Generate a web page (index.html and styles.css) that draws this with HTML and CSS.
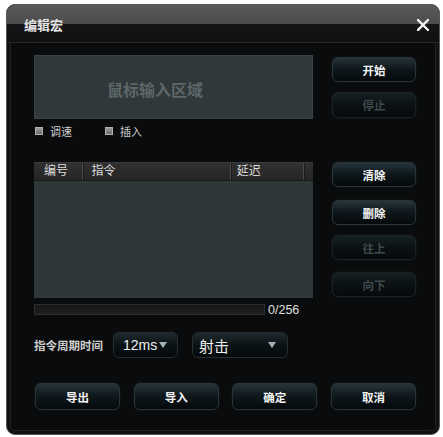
FILE: index.html
```html
<!DOCTYPE html>
<html lang="zh-CN">

<head>
    <meta charset="UTF-8">
    <title>编辑宏</title>
    <link rel="stylesheet" href="styles.css">
</head>

<body>
    <div class="dialog">
        <div class="titlebar">
            <span class="title">编辑宏</span>
            <svg class="close" width="12" height="12" viewBox="0 0 12 12">
                <path d="M1 1 L11 11 M11 1 L1 11" stroke="#f2f2f2" stroke-width="2.4" stroke-linecap="square" />
            </svg>
        </div>

        <div class="content">
            <div class="main">
                <div class="left">
                    <div class="mouse-area">鼠标输入区域</div>
                    <div class="checks">
                        <label class="check"><span class="box"></span>调速</label>
                        <label class="check"><span class="box"></span>插入</label>
                    </div>

                    <div class="list">
                        <div class="list-head">
                            <span class="col col-no">编号</span>
                            <span class="col col-cmd">指令</span>
                            <span class="col col-delay">延迟</span>
                            <span class="col col-end"></span>
                        </div>
                        <div class="list-body"></div>
                    </div>

                    <div class="progress-row">
                        <div class="progress"></div>
                        <span class="count">0/256</span>
                    </div>

                    <div class="cycle-row">
                        <span class="cycle-label">指令周期时间</span>
                        <div class="select select-ms"><span>12ms</span><i class="arrow"></i></div>
                        <div class="select select-act"><span>射击</span><i class="arrow"></i></div>
                    </div>
                </div>

                <div class="right">
                    <button class="btn btn-start">开始</button>
                    <button class="btn btn-stop" disabled>停止</button>
                    <button class="btn btn-clear">清除</button>
                    <button class="btn btn-del">删除</button>
                    <button class="btn btn-up" disabled>往上</button>
                    <button class="btn btn-down" disabled>向下</button>
                </div>
            </div>

            <div class="footer">
                <button class="btn">导出</button>
                <button class="btn">导入</button>
                <button class="btn">确定</button>
                <button class="btn">取消</button>
            </div>
        </div>
    </div>
</body>

</html>
```

FILE: styles.css
```css
body {
    margin: 0;
    background-color: #fff;
    font-family: "Liberation Sans", "Noto Sans CJK SC", sans-serif;
}

.dialog {
    box-sizing: border-box;
    width: 434px;
    height: 431px;
    margin: 4px 0 0 6px;
    border: 1px solid #555;
    border-radius: 9px;
    background-color: #0a0b0c;
    box-shadow: inset 0 0 0 3px #101112, inset 0 0 0 4px #1f2122;
    overflow: hidden;
}

.titlebar {
    height: 37px;
    display: flex;
    align-items: center;
    justify-content: space-between;
    padding: 0 10px 0 17px;
    background: linear-gradient(#5a5a5a 0, #4c4c4c 19px, #141516 19px, #0f1011 36px);
    border-bottom: 1px solid #262829;
}

.title {
    color: #e4e4e4;
    font-size: 13px;
    font-weight: bold;
    margin-top: 2px;
}

.close {
    margin-top: 2px;
}

.content {
    padding: 12px 0 0 27px;
}

.main {
    display: flex;
    gap: 19px;
}

.left {
    width: 279px;
    display: flex;
    flex-direction: column;
}

.mouse-area {
    box-sizing: border-box;
    height: 64px;
    background-color: #30383a;
    border: 1px solid #394244;
    color: #5d6769;
    font-size: 16px;
    font-weight: bold;
    display: flex;
    align-items: center;
    padding: 3px 0 0 72px;
}

.checks {
    display: flex;
    margin-top: 6px;
    height: 12px;
    align-items: center;
}

.check {
    display: flex;
    align-items: center;
    color: #d0d0d0;
    font-size: 11px;
    width: 70px;
}

.box {
    width: 8px;
    height: 8px;
    margin: 0 7px 0 1px;
    background: linear-gradient(#9a9a9a, #6a6a6a);
    border: 1px solid #b0b0b0;
    box-sizing: border-box;
}

.list {
    margin-top: 25px;
    border-top: 1px solid #3a3a3a;
}

.list-head {
    box-sizing: border-box;
    height: 18px;
    display: flex;
    background: linear-gradient(#303030, #262626);
    border-bottom: 1px solid #1a1a1a;
    color: #dedede;
    font-size: 12px;
    line-height: 17px;
}

.col {
    box-sizing: border-box;
    border-right: 1px solid #4a4a4a;
    box-shadow: 1px 0 0 #1c1c1c;
    padding-left: 9px;
}

.col-no {
    width: 49px;
    padding-left: 10px;
}

.col-cmd {
    width: 150px;
}

.col-delay {
    width: 74px;
    padding-left: 6px;
}

.col-end {
    flex: 1;
    border-right: none;
    box-shadow: none;
}

.list-body {
    height: 117px;
    background-color: #2f3739;
}

.progress-row {
    display: flex;
    align-items: center;
    margin-top: 6px;
    height: 11px;
}

.progress {
    box-sizing: border-box;
    width: 231px;
    height: 11px;
    background: linear-gradient(#161616, #202020);
    border: 1px solid #2e2e2e;
}

.count {
    margin-left: 3px;
    color: #e0e0e0;
    font-size: 12.5px;
}

.cycle-row {
    display: flex;
    align-items: center;
    margin-top: 17px;
    height: 26px;
}

.cycle-label {
    width: 79px;
    color: #cfcfcf;
    font-size: 11.5px;
    font-weight: bold;
}

.select {
    box-sizing: border-box;
    height: 26px;
    display: flex;
    align-items: center;
    justify-content: space-between;
    border: 1px solid #262e31;
    border-radius: 6px;
    background: linear-gradient(#1f292d, #0b1214 55%, #05090a);
    color: #f0f0f0;
}

.select-ms {
    width: 65px;
    padding: 0 10px 0 9px;
    font-size: 14px;
}

.select-act {
    width: 96px;
    margin-left: 14px;
    padding: 0 11px 0 6px;
    font-size: 15px;
}

.arrow {
    width: 0;
    height: 0;
    border-left: 4px solid transparent;
    border-right: 4px solid transparent;
    border-top: 6px solid #a3b3ba;
}

.right {
    width: 84px;
    display: flex;
    flex-direction: column;
}

.btn {
    box-sizing: border-box;
    width: 84px;
    height: 25px;
    padding: 0;
    border: 1px solid #29333a;
    border-radius: 6px;
    background: linear-gradient(#26343a, #0e171a 50%, #05090b);
    box-shadow: 0 0 2px #1a2226;
    color: #f4f4f4;
    font-family: "Noto Sans CJK SC", sans-serif;
    font-size: 11.5px;
    font-weight: bold;
}

.btn:disabled {
    background: linear-gradient(#172024, #0b1113 50%, #07090a);
    border-color: #1a2226;
    color: #3f4a4d;
}

.btn-start {
    margin-top: 2px;
}

.btn-stop {
    margin-top: 10px;
    height: 26px;
}

.btn-clear {
    margin-top: 44px;
}

.btn-del {
    margin-top: 13px;
}

.btn-up {
    margin-top: 10px;
}

.btn-down {
    margin-top: 12px;
}

.footer {
    display: flex;
    justify-content: space-between;
    width: 381px;
    margin: 25px 0 0 1px;
}

.footer .btn {
    width: 85px;
    height: 27px;
}
```
